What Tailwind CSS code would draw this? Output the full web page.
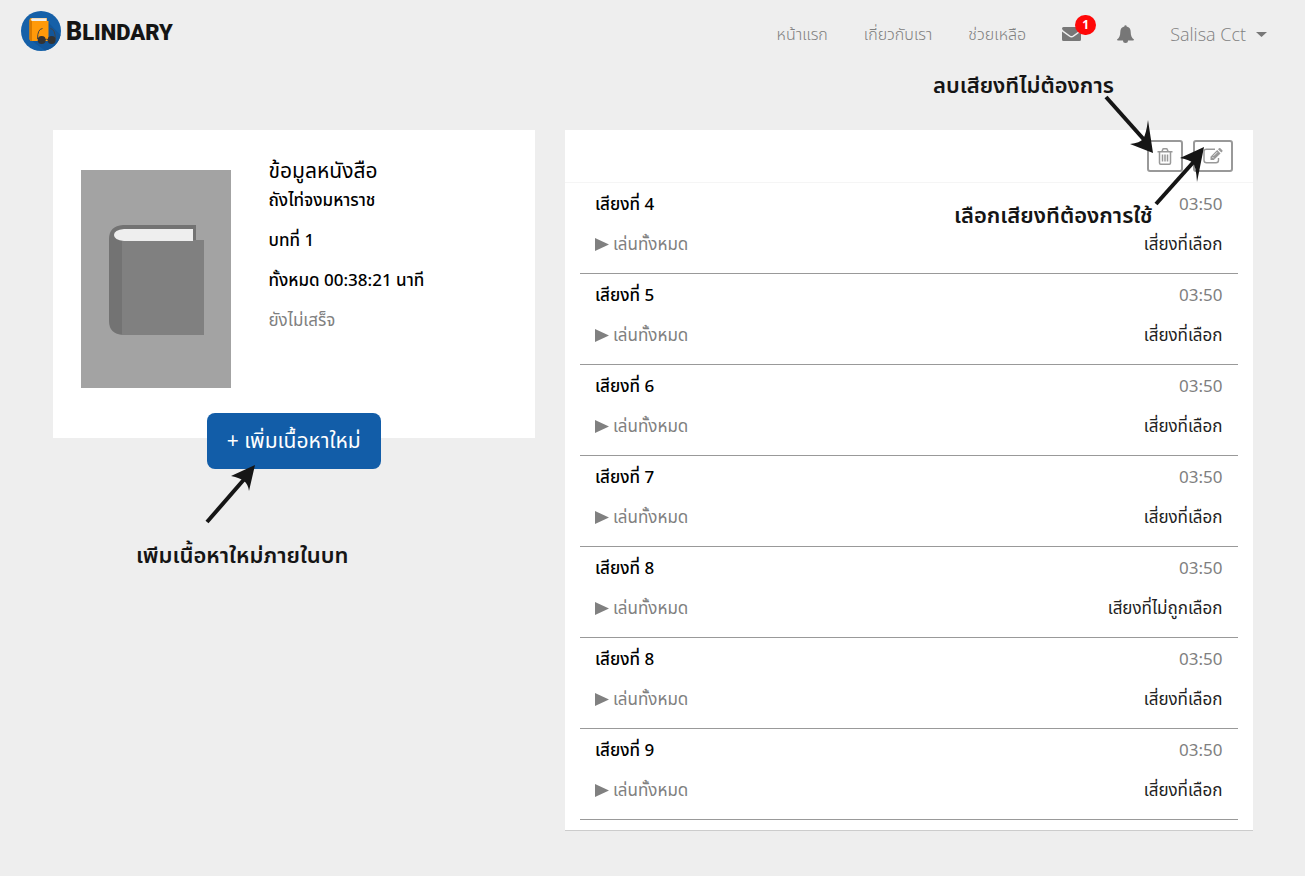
<!DOCTYPE html>
<html lang="th">
<head>
<meta charset="utf-8">
<title>Blindary</title>
<script src="https://cdn.jsdelivr.net/npm/@tailwindcss/browser@4"></script>
</head>
<body class="relative min-h-screen bg-[#eeeeee] font-['Noto_Sans','Noto_Sans_Thai','Loma',sans-serif] text-[17px] text-black">
<header class="flex h-[62px] items-center justify-between pr-[38px] pl-5">
  <a href="#" class="flex items-center gap-1">
    <svg class="size-[42px]" viewBox="0 0 42 42" aria-hidden="true">
      <circle cx="21" cy="21" r="20" fill="#1560a8"/>
      <path d="M28 12l12.500 13a20 20 0 0 1-15.500 15.500L12 31z" fill="#12569a"/>
      <path d="M9.500 10q0-2 2-2H27v3h1.500v20h-17q-2 0-2-2z" fill="#ff9a0a"/>
      <path d="M9.500 10v19q0 2 2.500 2V11z" fill="#d97b00"/>
      <path d="M12 8.300h14.500V11H12q-2-1.300 0-2.700z" fill="#eee"/>
      <path d="M17.500 29q0-10 5-10.500M35.300 29q0-10-5-10.500M24 30q2.500-1.500 5 0" fill="none" stroke="#444" stroke-width="1"/>
      <circle cx="21.700" cy="30" r="4" fill="#333"/><circle cx="31.600" cy="30" r="4" fill="#333"/>
    </svg>
    <span class="font-['Roboto',sans-serif] text-[25px] leading-none font-black text-[#151515]">B<span class="text-[22px]">LINDARY</span></span>
  </a>
  <nav class="flex items-center gap-9 pt-[6px] text-base font-light text-[#808080]">
    <a href="#">หน้าแรก</a>
    <a href="#">เกี่ยวกับเรา</a>
    <a href="#">ช่วยเหลือ</a>
    <a href="#" class="relative" aria-label="ข้อความ">
      <svg class="h-[14px] w-[19px]" viewBox="0 0 19 14" fill="#777" aria-hidden="true"><path d="M0 1.500Q0 0 1.500 0h16Q19 0 19 1.500q0 1-1.500 2.200L11 8.500q-1.500 1-3 0L1.500 3.700Q0 2.500 0 1.500zM0 4.500l7 5q2.500 1.800 5 0l7-5v8q0 1.500-1.500 1.500h-16Q0 14 0 12.500z"/></svg>
      <span class="absolute -top-3 left-[13px] flex h-5 w-[21px] items-center justify-center rounded-full bg-[#ff0808] text-xs font-bold text-white">1</span>
    </a>
    <a href="#" aria-label="แจ้งเตือน">
      <svg class="h-[18px] w-[17px]" viewBox="0 0 17 18" fill="#777" aria-hidden="true"><path d="M7.300 1.500a1.200 1.200 0 0 1 2.400 0q4 .8 4 5.500c0 4 1 5.700 3.300 7.500q0 1-1 1h-5a2.500 2.500 0 0 1-5 0H1q-1 0-1-1C2.300 12.700 3.300 11 3.300 7q0-4.700 4-5.500z"/></svg>
    </a>
    <a href="#" class="flex items-center gap-[10px] font-['Open_Sans'] text-[18px]">Salisa Cct
      <svg class="h-[5px] w-[11px]" viewBox="0 0 11 5" fill="#777" aria-hidden="true"><path d="M0 0h11L5.500 5z"/></svg>
    </a>
  </nav>
</header>

<main class="mx-auto mt-[68px] grid max-w-[1200px] grid-cols-12 items-start gap-x-[30px]">
  <section class="col-span-5">
    <div class="flex h-[308px] gap-[38px] bg-white pl-7">
      <svg class="mt-10 h-[218px] w-[150px] shrink-0" viewBox="0 0 150 218" role="img" aria-label="หนังสือ">
        <path fill="#a3a3a3" d="M0 0h150v218H0z"/>
        <path fill="#737373" d="M42 55h73v16H42v94q-14-1-14-14V69q0-13 14-14z"/>
        <path fill="#808080" d="M41 70h82v95H41z"/>
        <path fill="#eee" d="M43 59h69v12H43q-10-1-10-6t10-6z"/>
      </svg>
      <div class="pt-[26px]">
        <h2 class="text-[21px] leading-7">ข้อมูลหนังสือ</h2>
        <div class="flex flex-col gap-4 pt-1 leading-6 font-medium">
          <p>ถังไท่จงมหาราช</p>
          <p>บทที่ 1</p>
          <p>ทั้งหมด 00:38:21 นาที</p>
          <p class="font-normal text-[#808080]">ยังไม่เสร็จ</p>
        </div>
      </div>
    </div>
    <div class="relative -mt-[25px] flex justify-center">
      <button class="h-14 rounded-lg bg-[#125da8] px-5 text-[21px] text-white">+ เพิ่มเนื้อหาใหม่</button>
    </div>
  </section>

  <section class="col-span-7 border-b border-[#cccccc] bg-white pb-[10px]">
    <div class="flex h-[53px] items-center justify-end gap-[10px] border-b border-[#f5f5f5] pr-5">
      <button class="flex h-8 w-9 items-center justify-center rounded-[3px] border-2 border-[#999]" aria-label="ลบ">
        <svg class="h-[17px] w-4" viewBox="0 0 16 17" fill="none" stroke="#999" stroke-width="1.500" aria-hidden="true"><path d="M.5 3.700h15M5 3.500l.7-2q.2-.7 1-.7h2.600q.8 0 1 .7l.7 2M2.500 4v11q0 1.200 1.200 1.200h8.600q1.200 0 1.200-1.200V4M5.500 6.500v7M8 6.500v7M10.500 6.500v7"/></svg>
      </button>
      <button class="flex h-8 w-10 items-center justify-center rounded-[3px] border-2 border-[#999]" aria-label="แก้ไข">
        <svg class="h-4 w-5" viewBox="0 0 20 16" aria-hidden="true"><path d="M12 1.200H3.500q-2.500 0-2.500 2.500v8.600q0 2.500 2.500 2.500H13q2.500 0 2.500-2.500V10" fill="none" stroke="#999" stroke-width="1.400"/><path d="M7.500 8.800l6.700-6.700 3.300 3.300-6.700 6.700H7.500zM15 1.300l1-1q.7-.6 1.400 0l1.900 1.900q.6.700 0 1.400l-1 1z" fill="#999"/><path d="M9.300 8.900l1.400 1.400M10.500 7.800l3.700-3.700" stroke="#fff" stroke-width=".8"/></svg>
      </button>
    </div>
    <ul id="tracks" class="px-[15px]"></ul>
  </section>
</main>

<template id="track">
  <li class="grid h-[91px] grid-cols-2 content-start gap-y-4 border-b border-[#999] px-[15px] pt-[9px] leading-6">
    <h3 class="name font-medium"></h3>
    <span class="text-right text-[#808080]">03:50</span>
    <button class="flex items-center gap-1 text-left text-[#808080]">
      <svg class="h-[13px] w-[14px]" viewBox="0 0 14 13" fill="#808080" aria-hidden="true"><path d="M0 0l14 6.500L0 13z"/></svg>เล่นทั้งหมด
    </button>
    <span class="state text-right text-[#222]"></span>
  </li>
</template>

<p class="absolute top-[70px] left-[933px] text-[22px] leading-7 font-semibold whitespace-nowrap text-[#151515]">ลบเสียงทีไม่ต้องการ</p>
<p class="absolute top-[200px] left-[954px] text-[22px] leading-7 font-semibold whitespace-nowrap text-[#151515]">เลือกเสียงทีต้องการใช้</p>
<p class="absolute top-[540px] left-[136px] text-[22px] leading-7 font-semibold whitespace-nowrap text-[#151515]">เพีมเนื้อหาใหม่ภายในบท</p>
<svg class="pointer-events-none absolute top-[90px] left-[1100px] h-[120px] w-[110px]" viewBox="0 0 110 120" fill="#151515" aria-hidden="true">
  <path d="M6 7l41 46" stroke="#151515" stroke-width="4"/><path d="M53 63l-23-9q10-1 13-5t5-19z"/>
  <path d="M56 114l42-47" stroke="#151515" stroke-width="4"/><path d="M104 57l-24 11q10 2 13 5t4 19z"/>
</svg>
<svg class="pointer-events-none absolute top-[460px] left-[200px] h-[70px] w-[60px]" viewBox="0 0 60 70" fill="#151515" aria-hidden="true">
  <path d="M7 62l40-46" stroke="#151515" stroke-width="4"/><path d="M55 5l-24 11q9 2 13 5t5 10z"/>
</svg>

<script>
const rows = [
  ['เสียงที่ 4', 'เสี่ยงที่เลือก'],
  ['เสียงที่ 5', 'เสี่ยงที่เลือก'],
  ['เสียงที่ 6', 'เสี่ยงที่เลือก'],
  ['เสียงที่ 7', 'เสี่ยงที่เลือก'],
  ['เสียงที่ 8', 'เสียงที่ไม่ถูกเลือก'],
  ['เสียงที่ 8', 'เสี่ยงที่เลือก'],
  ['เสียงที่ 9', 'เสี่ยงที่เลือก']
];
const tpl = document.getElementById('track');
for (const [name, state] of rows) {
  const n = tpl.content.cloneNode(true);
  n.querySelector('.name').textContent = name;
  n.querySelector('.state').textContent = state;
  document.getElementById('tracks').append(n);
}
</script>
</body>
</html>
